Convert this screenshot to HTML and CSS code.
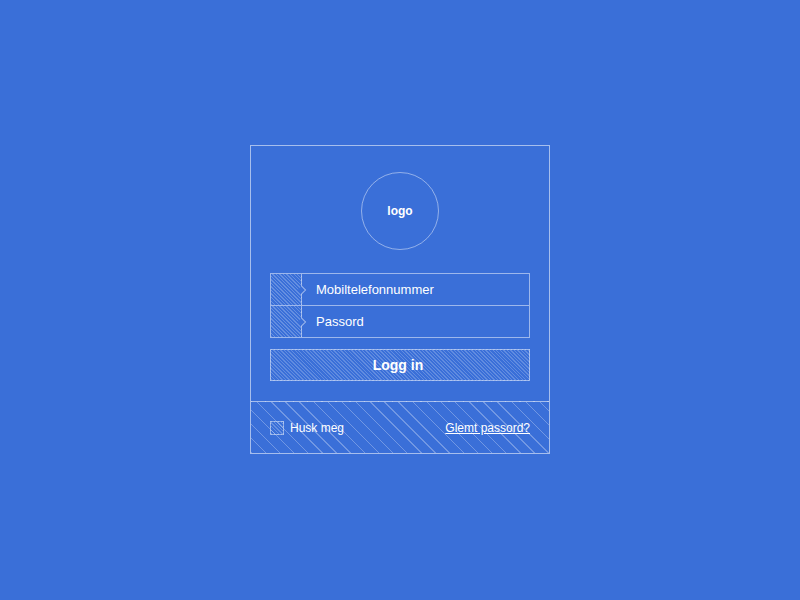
FILE: index.html
```html
<!DOCTYPE html>
<html lang="no">
<head>
<meta charset="utf-8">
<title>Logg inn</title>
<link rel="stylesheet" href="styles.css">
</head>
<body>
<div class="page">
  <div class="card">
    <div class="card-main">
      <div class="logo">logo</div>
      <div class="fields">
        <div class="field"><span class="addon"></span><span class="label">Mobiltelefonnummer</span></div>
        <div class="field"><span class="addon"></span><span class="label">Passord</span></div>
      </div>
      <div class="btn">Logg in</div>
    </div>
    <div class="card-foot">
      <label class="remember"><span class="check"></span>Husk meg</label>
      <a class="forgot" href="#">Glemt passord?</a>
    </div>
  </div>
</div>
</body>
</html>
```

FILE: styles.css
```css
html, body {
  margin: 0;
  padding: 0;
  height: 100%;
}
body {
  background: #3a6fd8;
  font-family: "Liberation Sans", Arial, sans-serif;
  color: #fff;
}
.page {
  height: 600px;
  display: flex;
  align-items: flex-start;
  justify-content: center;
  padding-top: 145px;
  box-sizing: border-box;
}
.card {
  width: 300px;
  box-sizing: border-box;
  border: 1px solid rgba(255,255,255,0.55);
}
.card-main {
  padding: 26px 19px 20px;
  display: flex;
  flex-direction: column;
  align-items: stretch;
}
.logo {
  align-self: center;
  width: 78px;
  height: 78px;
  box-sizing: border-box;
  border: 1px solid rgba(255,255,255,0.45);
  border-radius: 50%;
  display: flex;
  align-items: center;
  justify-content: center;
  font-weight: bold;
  font-size: 12px;
}
.fields {
  margin-top: 23px;
  border: 1px solid rgba(255,255,255,0.5);
}
.field {
  height: 31px;
  display: flex;
  align-items: center;
  font-size: 13px;
}
.field + .field {
  border-top: 1px solid rgba(255,255,255,0.5);
}
.addon {
  position: relative;
  width: 30px;
  height: 100%;
  border-right: 1px solid rgba(255,255,255,0.5);
  background: repeating-linear-gradient(45deg, rgba(255,255,255,0.22) 0 1px, transparent 1px 2.5px);
  flex: none;
}
.addon::after {
  content: "";
  position: absolute;
  right: -4px;
  top: 50%;
  width: 5px;
  height: 5px;
  margin-top: -3px;
  background: #3a6fd8;
  border-top: 1px solid rgba(255,255,255,0.5);
  border-right: 1px solid rgba(255,255,255,0.5);
  transform: rotate(45deg);
}
.label {
  margin-left: 14px;
}
.btn {
  margin-top: 11px;
  height: 32px;
  box-sizing: border-box;
  border: 1px solid rgba(255,255,255,0.5);
  background: repeating-linear-gradient(45deg, rgba(255,255,255,0.2) 0 1px, transparent 1px 2.5px);
  display: flex;
  align-items: center;
  justify-content: center;
  font-weight: bold;
  font-size: 14px;
  padding-right: 4px;
}
.card-foot {
  border-top: 1px solid rgba(255,255,255,0.55);
  height: 51px;
  padding: 0 19px;
  display: flex;
  align-items: center;
  justify-content: space-between;
  font-size: 12px;
  background: repeating-linear-gradient(45deg, rgba(255,255,255,0.28) 0 1px, transparent 1px 10px);
}
.remember {
  display: flex;
  align-items: center;
  gap: 6px;
}
.check {
  width: 12px;
  height: 12px;
  border: 1px solid rgba(255,255,255,0.45);
  background: repeating-linear-gradient(45deg, rgba(255,255,255,0.22) 0 1px, transparent 1px 2.5px);
}
.forgot {
  color: #fff;
  text-decoration: underline;
}
```
